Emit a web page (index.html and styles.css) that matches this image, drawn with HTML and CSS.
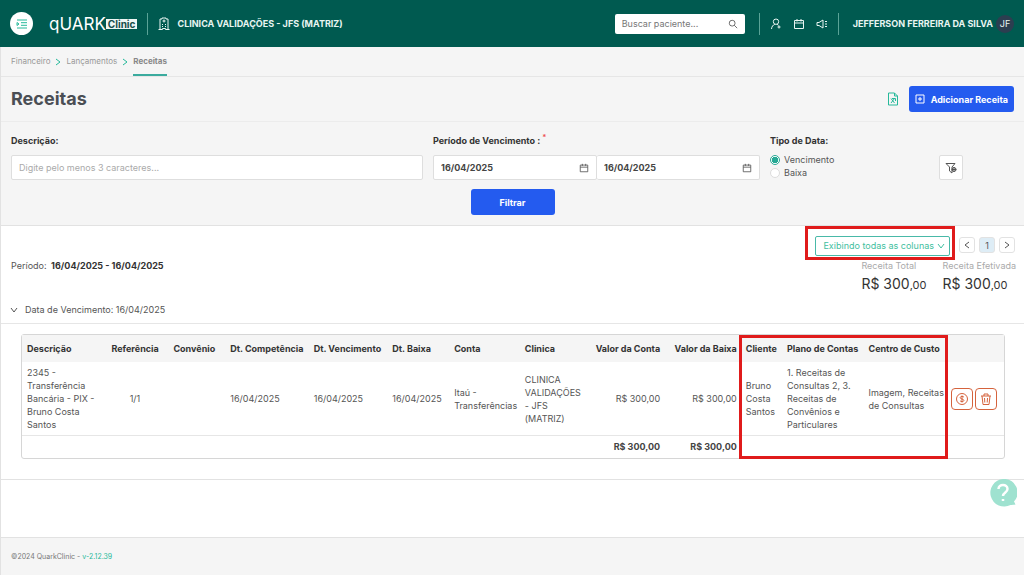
FILE: index.html
```html
<!DOCTYPE html>
<html lang="pt-BR">
<head>
<meta charset="utf-8">
<title>QuarkClinic - Receitas</title>
<link rel="stylesheet" href="styles.css">
</head>
<body>
<svg class="defs" width="0" height="0" aria-hidden="true">
  <symbol id="calendar" viewBox="0 0 12 12"><path d="M1.5 2.5h9v8h-9zM1.5 5h9M4 1v2.5M8 1v2.5"/></symbol>
  <symbol id="down" viewBox="0 0 10 10"><path d="M2 3l3 4 3-4"/></symbol>
  <symbol id="right" viewBox="0 0 10 10"><path d="M3 2l4 3-4 3"/></symbol>
  <symbol id="left" viewBox="0 0 10 10"><path d="M7 2L3 5l4 3"/></symbol>
</svg>
<header class="topbar">
  <button class="menu" aria-label="Menu"><svg class="icon i12" viewBox="0 0 12 12"><path d="M1 2h10M5 4.7h6M5 7.3h6M1 10h10M1 4.5v3L3 6z"/></svg></button>
  <a class="logo" href="#"><span class="quark">qUARK</span><span class="clinic">Clinic</span></a>
  <span class="rule"></span>
  <svg class="icon i14 building" viewBox="0 0 14 14"><path d="M3 12.500V2h2V1h4v1h2v10.500M1.500 12.500h4M8.500 12.500h4M7 2.500v3M5.500 4h3M5 7.500h1M8 7.500h1M5 9.500h1M8 9.500h1M5.500 12.500v-1h3v1"/></svg>
  <strong class="clinic-name">CLINICA VALIDAÇÕES - JFS (MATRIZ)</strong>
  <div class="search"><input type="text" aria-label="Buscar paciente" placeholder="Buscar paciente..."><svg class="icon i10" viewBox="0 0 12 12"><circle cx="5" cy="5" r="3.500"/><path d="M7.500 7.500L11 11"/></svg></div>
  <span class="rule"></span>
  <nav class="shortcuts">
    <button aria-label="Novo paciente"><svg class="icon i12" viewBox="0 0 12 12"><circle cx="6" cy="3.700" r="2.700"/><path d="M1.500 11c.2-2.500 1.500-4 3.300-4.700M7 6.300l1.500 1M9 7.500v3M7.500 9h3"/></svg></button>
    <button aria-label="Agenda"><svg class="icon i12"><use href="#calendar"/></svg></button>
    <button aria-label="Avisos"><svg class="icon i12" viewBox="0 0 12 12"><path d="M1 4.500h2L7 2v8L3 7.500H1zM9 6h2M9 3.500h2M9 8.500h2"/></svg></button>
  </nav>
  <span class="rule"></span>
  <strong class="user">JEFFERSON FERREIRA DA SILVA</strong>
  <span class="avatar">JF</span>
</header>
<main class="page">
  <nav class="crumbs" aria-label="Caminho">
    <a href="#">Financeiro</a><svg class="icon i10"><use href="#right"/></svg>
    <a href="#">Lançamentos</a><svg class="icon i10"><use href="#right"/></svg>
    <a href="#" class="current">Receitas</a>
  </nav>
  <div class="heading">
    <h1>Receitas</h1>
    <button class="excel" aria-label="Exportar planilha"><svg class="icon i14" viewBox="0 0 14 14"><path d="M2.500 1h6l3 3v9h-9zM8.500 1v3h3M5 6.500L8.500 11M8.500 6.500L5 11M6 6.500h3.500V9"/></svg></button>
    <button class="primary add"><svg class="icon i10" viewBox="0 0 10 10"><path d="M1 1h8v8H1zM5 3v4M3 5h4"/></svg>Adicionar Receita</button>
  </div>
  <form class="filters">
    <div class="fields">
      <div class="field"><label class="title" for="desc">Descrição:</label><input id="desc" class="box" type="text" placeholder="Digite pelo menos 3 caracteres..."></div>
      <div class="field period"><label class="title" for="start">Período de Vencimento : <sup>*</sup></label>
        <div class="dates"><div class="date box"><input id="start" type="text" value="16/04/2025"><svg class="icon i10" viewBox="0 0 12 12"><use href="#calendar"/></svg></div><div class="date box"><input type="text" aria-label="Fim do período" value="16/04/2025"><svg class="icon i10" viewBox="0 0 12 12"><use href="#calendar"/></svg></div></div>
      </div>
      <fieldset class="field type"><legend class="title">Tipo de Data:</legend>
        <label><input type="radio" name="tipo" checked>Vencimento</label>
        <label><input type="radio" name="tipo">Baixa</label>
      </fieldset>
      <button class="box clear" type="button" aria-label="Mais filtros"><svg class="icon i12" viewBox="0 0 12 12"><path d="M1 1.500h9L7 5v6L4.500 9V5z"/><circle cx="9" cy="7.500" r="2"/><path d="M9 5v5M6.800 7.500h4.500"/></svg></button>
    </div>
    <button class="primary submit" type="button">Filtrar</button>
  </form>
  <section class="results">
    <div class="tools">
      <div class="marked"><button class="columns">Exibindo todas as colunas<svg class="icon i10"><use href="#down"/></svg></button></div>
      <nav class="pager" aria-label="Páginas"><button aria-label="Anterior"><svg class="icon i10"><use href="#left"/></svg></button><button class="on">1</button><button aria-label="Próxima"><svg class="icon i10"><use href="#right"/></svg></button></nav>
    </div>
    <div class="summary">
      <p>Período: <strong>16/04/2025 - 16/04/2025</strong></p>
      <div class="total"><span>Receita Total</span><b>R$ 300<small>,00</small></b></div>
      <div class="total"><span>Receita Efetivada</span><b>R$ 300<small>,00</small></b></div>
    </div>
    <button class="group"><svg class="icon i10"><use href="#down"/></svg>Data de Vencimento: 16/04/2025</button>
    <div class="table-area">
      <div class="table-wrap">
        <table>
          <colgroup><col class="w86"><col class="w57"><col class="w64"><col class="w85"><col class="w80"><col class="w63"><col class="w72"><col class="w69"><col class="w78"><col class="w78"><col class="w42"><col class="w83"><col class="w85"><col></colgroup>
          <thead><tr><th>Descrição</th><th class="mid">Referência</th><th class="mid">Convênio</th><th>Dt. Competência</th><th>Dt. Vencimento</th><th>Dt. Baixa</th><th>Conta</th><th>Clinica</th><th class="num">Valor da Conta</th><th class="num">Valor da Baixa</th><th>Cliente</th><th>Plano de Contas</th><th>Centro de Custo</th><th></th></tr></thead>
          <tbody><tr><td>2345 - Transferência Bancária - PIX - Bruno Costa Santos</td><td class="mid">1/1</td><td></td><td>16/04/2025</td><td>16/04/2025</td><td>16/04/2025</td><td>Itaú - Transferências</td><td>CLINICA VALIDAÇÕES - JFS (MATRIZ)</td><td class="num">R$ 300,00</td><td class="num">R$ 300,00</td><td>Bruno Costa Santos</td><td>1. Receitas de Consultas 2, 3. Receitas de Convênios e Particulares</td><td>Imagem, Receitas de Consultas</td>
            <td><div class="actions"><button aria-label="Baixar"><svg class="icon i14" viewBox="0 0 14 14"><circle cx="7" cy="7" r="5.500"/><path d="M9 5.300C8.500 4 5.200 4 5.200 5.700c0 1.700 3.700 1 3.700 2.700C8.900 10 5.500 10 5 8.600M7 3.500v7"/></svg></button><button aria-label="Excluir"><svg class="icon i14" viewBox="0 0 14 14"><path d="M2 4h10M5 4V2h4v2M3 4l1 8.500h6L11 4M5.500 6l.3 4.500M8.500 6l-.3 4.500"/></svg></button></div></td></tr></tbody>
          <tfoot><tr><td colspan="8"></td><td class="num">R$ 300,00</td><td class="num">R$ 300,00</td><td colspan="4"></td></tr></tfoot>
        </table>
        <div class="highlight"></div>
      </div>
    </div>
  </section>
  <footer>©2024 QuarkClinic - <a href="#">v-2.12.39</a></footer>
</main>
<button class="help" aria-label="Ajuda"><svg viewBox="0 0 28 28"><path class="bubble" d="M14 0a13.500 13.500 0 0 1 11 22.500l1.500 3c-2 .5-3 .3-5 .5A13.800 13.800 0 1 1 14 0z"/><path class="mark" d="M9.500 10c0-5.500 9-5.500 9 0 0 3.500-4.500 3.300-4.500 7M14 20v2"/></svg></button>
</body>
</html>
```
FILE: styles.css
```css
* { box-sizing: border-box; }
body {
  margin: 0;
  min-height: 100vh;
  display: flex;
  flex-direction: column;
  font: 9px/13px Inter, "Liberation Sans", sans-serif;
  color: #555;
  background: #fff;
}
button, input { font: inherit; color: inherit; }
button { display: flex; align-items: center; justify-content: center; margin: 0; padding: 0; border: 0; background: none; }
a { color: inherit; text-decoration: none; }
.defs { position: absolute; }
.icon { flex: none; fill: none; stroke: currentColor; stroke-width: 1; }
.i10 { width: 10px; height: 10px; }
.i12 { width: 12px; height: 12px; }
.i14 { width: 14px; height: 14px; }

.topbar { display: flex; align-items: center; height: 47px; padding: 0 10px; background: #005a50; color: #e8f5f2; }
.menu { width: 23px; height: 23px; border-radius: 50%; background: #fff; color: #26b99a; }
.logo { display: flex; align-items: center; margin: 0 10px 0 16px; color: #fff; }
.quark { font-size: 17px; line-height: 20px; }
.clinic { padding: 0 2px; font-size: 10px; line-height: 10px; font-weight: 700; color: #174e4a; background: #eef7f5; }
.rule { width: 1px; height: 22px; background: #5aa397; }
.building { margin: 0 6px 0 9px; }
.clinic-name, .user { font-weight: 700; }
.search { display: flex; align-items: center; width: 130px; height: 20px; margin: 0 14px 0 auto; padding: 0 7px; border-radius: 2px; background: #fff; color: #555; }
.search input { flex: 1; min-width: 0; padding: 0; border: 0; outline: 0; background: none; }
::placeholder { color: #aaa; opacity: 1; }
.search ::placeholder { color: #777; }
.shortcuts { display: flex; gap: 11px; padding: 0 10px; }
.user { margin-left: 14px; }
.avatar { width: 18px; height: 18px; margin-left: 3px; border-radius: 50%; background: #2c3e50; line-height: 18px; text-align: center; }

.page { flex: 1; display: flex; flex-direction: column; border-left: 1px solid #e2e2e2; }
.crumbs { display: flex; align-items: center; height: 30px; padding-left: 10px; background: #f5f5f5; border-bottom: 1px solid #e6e6e6; color: #999; font-size: 8px; }
.crumbs .icon { margin: 0 3px; color: #26b99a; }
.crumbs .current { height: 29px; padding-top: 8px; border-bottom: 2px solid #3bab9e; font-weight: 700; color: #888; }
.heading { display: flex; align-items: center; height: 45px; padding: 0 10px; background: #f5f5f5; border-bottom: 1px solid #ececec; }
h1 { flex: 1; margin: 0; font-size: 18px; line-height: 24px; font-weight: 700; color: #4a4e54; }
.excel { margin-right: 9px; color: #26b99a; }
.primary { height: 26px; border-radius: 3px; background: #245bef; color: #fff; font-weight: 700; }
.add { gap: 6px; padding: 0 6px; }

.filters { padding: 12px 10px 10px; background: #f5f5f5; border-bottom: 1px solid #e2e2e2; }
.fields { display: flex; gap: 10px; }
.field { flex: 412 1 0; display: flex; flex-direction: column; min-width: 0; }
.period { flex-grow: 327; }
.title { height: 13px; margin-bottom: 8px; padding: 0; font-weight: 700; color: #333; }
sup { line-height: 0; color: #e55; }
.box { height: 25px; border: 1px solid #dedede; border-radius: 2px; background: #fff; padding: 0 7px; }
.dates { display: flex; }
.date { flex: 1; display: flex; align-items: center; min-width: 0; }
.date + .date { border-left: 0; }
.date input { flex: 1; min-width: 0; padding: 0; border: 0; background: none; font-weight: 700; color: #444; }
.type { display: block; flex-grow: 159; margin: 0; padding: 0; border: 0; }
.type .title { margin-bottom: 6px; }
.type label { display: flex; align-items: center; gap: 4px; height: 13px; }
.type input { appearance: none; width: 10px; height: 10px; margin: 0; border: 1px solid #ddd; border-radius: 50%; background: #fff; }
.type input:checked { border-color: #26a995; background: radial-gradient(circle, #26a995 0 3px, #fff 3px); }
.clear { flex: none; width: 24px; margin: 21px 51px 0 0; padding: 0; }
.submit { width: 84px; margin: 9px auto 0; }

.results { border-bottom: 1px solid #e2e2e2; padding-bottom: 20px; }
.tools { display: flex; justify-content: flex-end; align-items: center; height: 33px; }
.marked { display: flex; margin-right: 4px; padding: 7px 2px 1px 7px; border: 3px solid #e01b1b; }
.columns { gap: 2px; height: 20px; padding: 0 3px 0 7px; border: 1px solid #49b9a8; border-radius: 2px; color: #3fc0a0; }
.pager { display: flex; gap: 4px; margin: 5px 9px 0 0; }
.pager button { width: 16px; height: 16px; border: 1px solid #e2e2e2; border-radius: 3px; }
.pager .on { background: #deedf6; }
.summary { display: flex; gap: 16px; height: 37px; padding: 0 8px 0 10px; }
.summary p { flex: 1; margin: 0; }
.summary strong { color: #333; margin-left: 2px; }
.total { display: flex; flex-direction: column; gap: 2px; color: #aaa; }
.total b { font-size: 14px; line-height: 20px; font-weight: 400; color: #333; }
.total small { font-size: 11px; }
.group { justify-content: flex-start; gap: 6px; width: 100%; height: 28px; padding-left: 8px; border-bottom: 1px solid #e6e6e6; }
.table-area { padding: 10px 19px 0 20px; }
.table-wrap { position: relative; border: 1px solid #d6d6d6; border-radius: 3px; }
table { width: 100%; table-layout: fixed; border-collapse: collapse; }
th, td { padding: 4px 4px 4px 5px; text-align: left; }
td:nth-child(13) { padding-right: 0; }
td:nth-child(14) { padding-left: 4px; }
th { height: 27px; white-space: nowrap; background: #f5f5f5; color: #333; font-weight: 700; }
tfoot td { height: 22px; border-top: 1px solid #e6e6e6; font-weight: 700; color: #444; }
.mid { text-align: center; }
.num { text-align: right; }
.w42 { width: 4.2%; } .w57 { width: 5.7%; } .w63 { width: 6.3%; } .w64 { width: 6.4%; }
.w69 { width: 6.9%; } .w72 { width: 7.2%; } .w78 { width: 7.8%; } .w80 { width: 8%; }
.w83 { width: 8.3%; } .w85 { width: 8.5%; } .w86 { width: 8.6%; }
.actions { display: flex; gap: 2px; }
.actions button { width: 22px; height: 22px; border: 1px solid #d5633d; border-radius: 4px; color: #d5633d; }
.highlight { position: absolute; top: 0; bottom: -1px; left: 73%; width: 21.300%; border: 3px solid #e01b1b; }
footer { height: 38px; margin-top: auto; padding: 12px 10px; border-top: 1px solid #e2e2e2; background: #f5f5f5; font-size: 7px; color: #777; }
footer a { color: #26b99a; }
.help { position: fixed; right: 7px; bottom: 68px; width: 28px; height: 28px; }
.help svg { width: 28px; height: 28px; }
.bubble { fill: #9fe2d0; }
.mark { fill: none; stroke: #fff; stroke-width: 2.500; }
```
